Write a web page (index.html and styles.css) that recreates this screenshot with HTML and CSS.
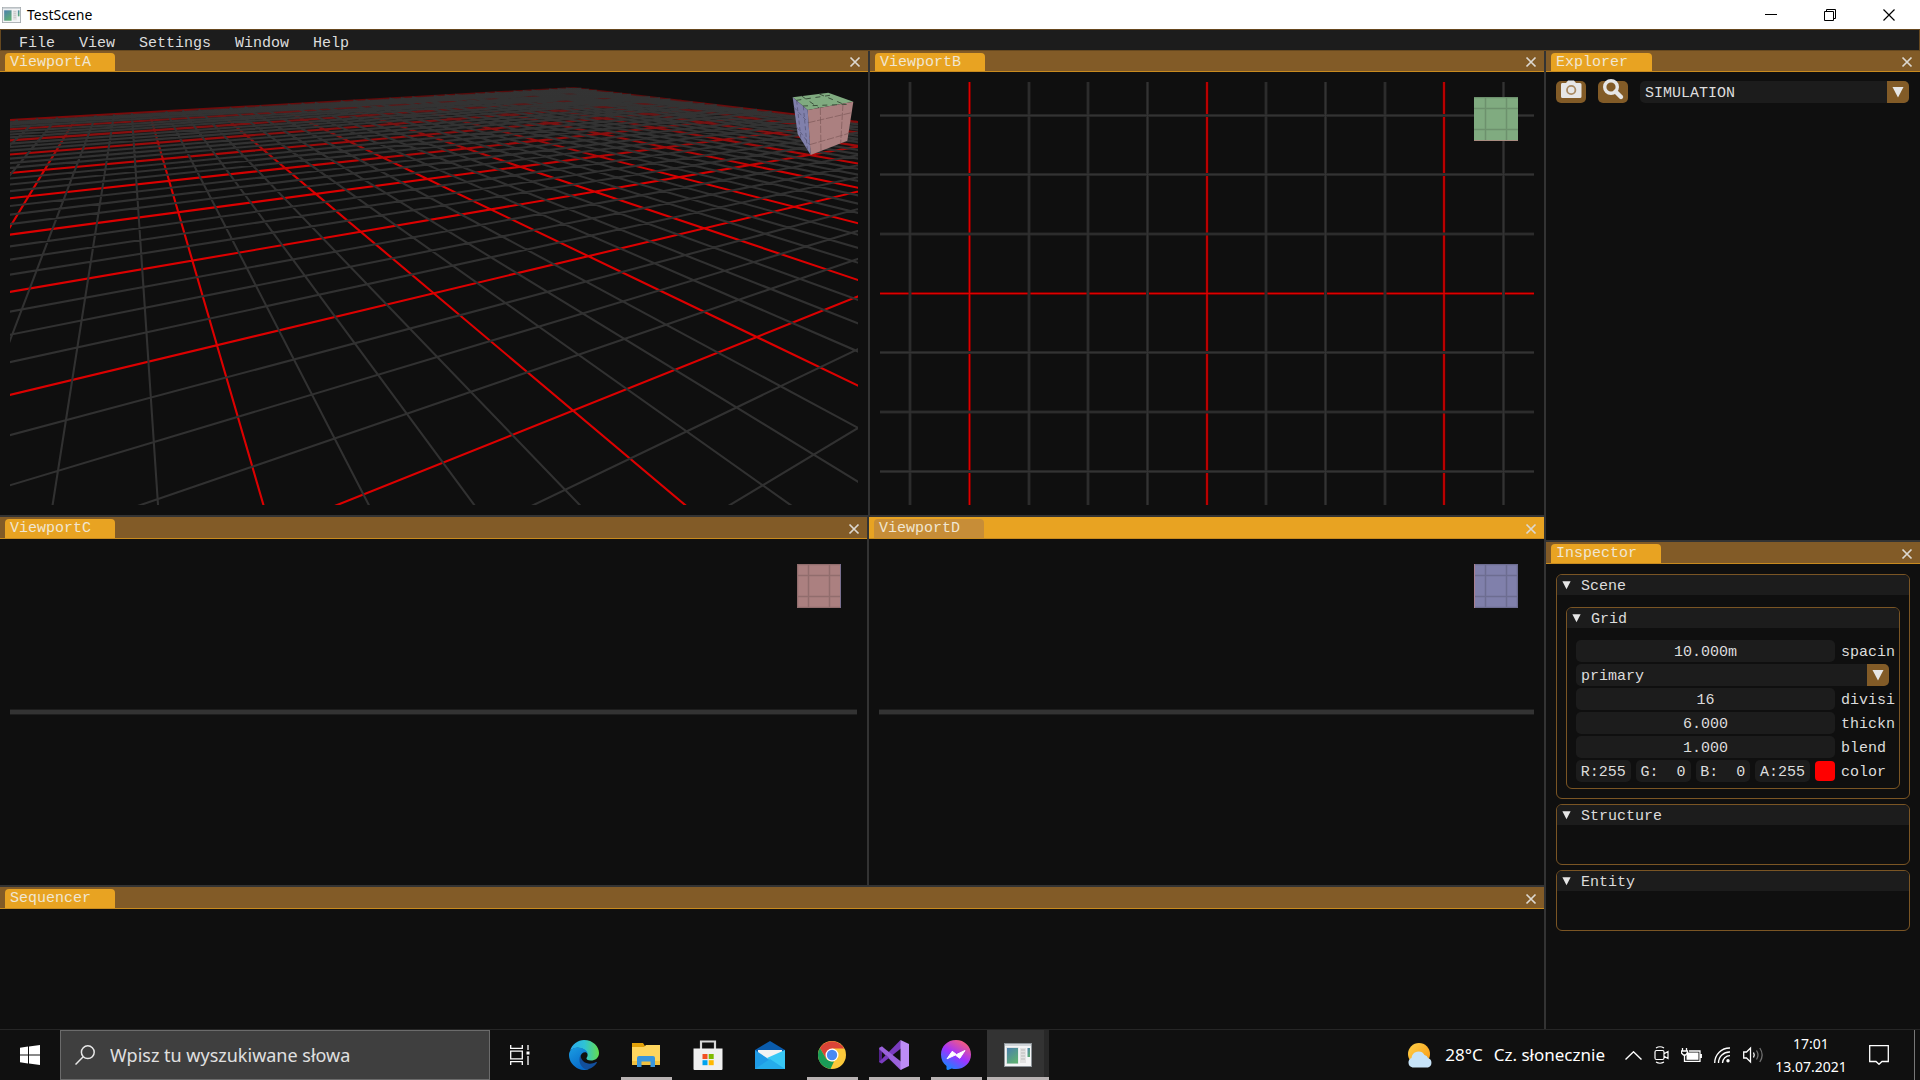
FILE: index.html
```html
<!DOCTYPE html>
<html lang="pl">
<head>
<meta charset="utf-8">
<title>TestScene</title>
<link rel="stylesheet" href="styles.css">
</head>
<body>
<svg class="defs" width="0" height="0" aria-hidden="true">
  <defs>
    <symbol id="close" viewBox="0 0 12 12"><path d="M1.5 1.5L10.5 10.5M10.5 1.5L1.5 10.5" stroke="#dcd8d0" stroke-width="1.7"/></symbol>
    <symbol id="arrow" viewBox="0 0 12 12"><path d="M.5 1H11.5L6 11.5Z" fill="#e6e6e6"/></symbol>
    <linearGradient id="app-pic" x1="0" y1="0" x2="0.6" y2="1"><stop offset="0" stop-color="#4b7fae"/><stop offset="1" stop-color="#5eae74"/></linearGradient>
    <symbol id="app" viewBox="0 0 28 24">
      <path d="M0 0H28V24H0Z" fill="#8d9499"/><path d="M1 1H27V23H1Z" fill="#f4f5f6"/><path d="M1 1H27V3H1Z" fill="#cfd4d8"/>
      <path d="M2 4H14.500V21H2Z" fill="#dfe3e5"/><path d="M3 5H14V20.500H3Z" fill="url(#app-pic)"/>
      <path d="M16 5H22V20H16Z" fill="#e2e2e2"/><path d="M17 7H21M17 10H21M17 13H21M17 16H21" stroke="#bbb"/>
      <path d="M23.500 5H26V14H23.500Z" fill="url(#app-pic)"/>
    </symbol>
  </defs>
</svg>

<header class="titlebar">
  <svg class="titlebar-icon" aria-hidden="true"><use href="#app"/></svg>
  <h1 class="titlebar-name">TestScene</h1>
  <div class="titlebar-buttons">
    <button class="win-button" aria-label="Minimize"><svg width="12" height="12"><path d="M0 5.500H12" stroke="#000"/></svg></button>
    <button class="win-button" aria-label="Restore"><svg width="12" height="12" fill="none" stroke="#000"><path d="M.5 2.500H9.500V11.500H.5ZM2.500 2.500V.5H11.500V9.500H9.500"/></svg></button>
    <button class="win-button" aria-label="Close"><svg width="12" height="12"><path d="M.5.5L11.500 11.500M11.500.5L.5 11.500" stroke="#000" stroke-width="1.200"/></svg></button>
  </div>
</header>

<nav class="menubar">
  <button class="menu-item">File</button>
  <button class="menu-item">View</button>
  <button class="menu-item">Settings</button>
  <button class="menu-item">Window</button>
  <button class="menu-item">Help</button>
</nav>

<main class="workspace">
  <div class="views">
    <div class="views-top">
      <section class="pane">
        <div class="tabbar"><h2 class="tab">ViewportA</h2><button class="tab-close" aria-label="Close ViewportA"><svg><use href="#close"/></svg></button></div>
        <div class="viewport">
          <svg class="scene" id="perspective" viewBox="10 82 848 423" preserveAspectRatio="xMidYMid slice">
            <defs>
              <linearGradient id="fade" gradientUnits="userSpaceOnUse" x1="0" y1="88" x2="0" y2="180"><stop offset="0" stop-color="#e00000" stop-opacity=".3"/><stop offset=".45" stop-color="#e00000" stop-opacity=".65"/><stop offset="1" stop-color="#dc0000"/></linearGradient>
              <linearGradient id="haze" gradientUnits="userSpaceOnUse" x1="0" y1="88" x2="0" y2="170"><stop offset="0" stop-color="#363636"/><stop offset=".4" stop-color="#363636" stop-opacity=".5"/><stop offset="1" stop-color="#363636" stop-opacity="0"/></linearGradient>
            </defs>
          </svg>
          <svg class="cube cube-solid" viewBox="66 66 186 192" stroke-linejoin="round">
            <path d="M68 82L175 68L250 95L113 120Z" fill="#80ab80"/>
            <path d="M113 120L250 95L232 212L122 255Z" fill="#ab8080"/>
            <path d="M68 82L113 120L122 255L83 192Z" fill="#8080ab"/>
            <path d="M79 91L193 74M99 108L232 103M95 78L147 114M148 72L217 101" stroke="#3c513c" stroke-width="3" stroke-dasharray="15 14" fill="none"/>
            <path d="M115 158L245 128M119 224L237 190M151 113L153 243M219 101L212 220" stroke="#7a5656" stroke-width="2" stroke-dasharray="22 5" fill="none"/>
            <path d="M72 112L115 158M79 170L119 224M80 92L93 208M100 109L112 238" stroke="#50506e" stroke-width="2" stroke-dasharray="12 8" fill="none"/>
          </svg>
        </div>
      </section>
      <section class="pane">
        <div class="tabbar"><h2 class="tab">ViewportB</h2><button class="tab-close" aria-label="Close ViewportB"><svg><use href="#close"/></svg></button></div>
        <div class="viewport">
          <svg class="scene" viewBox="880 82 654 423" preserveAspectRatio="xMidYMid slice" fill="none">
            <path d="M969.500 82V505M1207 82V505M1444 82V505M880 293.500H1534" stroke="#500000" stroke-width="3"/>
            <path d="M969.500 82V505M1207 82V505M1444 82V505M880 293.500H1534" stroke="#dc0000" stroke-width="1.500"/>
            <path d="M910 82V505M1029 82V505M1088 82V505M1147.500 82V505M1266 82V505M1325.500 82V505M1385 82V505M1503.500 82V505M880 115.500H1534M880 174.500H1534M880 234H1534M880 352.500H1534M880 412H1534M880 471.500H1534" stroke="#262626" stroke-width="3"/>
            <path d="M910 82V505M1029 82V505M1088 82V505M1147.500 82V505M1266 82V505M1325.500 82V505M1385 82V505M1503.500 82V505M880 115.500H1534M880 174.500H1534M880 234H1534M880 352.500H1534M880 412H1534M880 471.500H1534" stroke="#333"/>
          </svg>
          <svg class="cube cube-flat" viewBox="0 0 44 44"><path d="M0 0H44V44H0Z" fill="#80ab80"/><path d="M11.500 0V44M32.500 0V44M0 11.500H44M0 32.500H44M0 .5H44" stroke="#6d916d" stroke-width="1.500"/><path d="M0 43.500H44" stroke="#a98c80"/></svg>
        </div>
      </section>
    </div>
    <div class="views-bottom">
      <section class="pane">
        <div class="tabbar"><h2 class="tab">ViewportC</h2><button class="tab-close" aria-label="Close ViewportC"><svg><use href="#close"/></svg></button></div>
        <div class="viewport viewport-edge">
          <svg class="cube cube-flat" viewBox="0 0 44 44"><path d="M0 0H44V44H0Z" fill="#ab8080"/><path d="M11.500 0V44M32.500 0V44M0 11.500H44M0 32.500H44M0 .5H44M0 43.500H44M.5 0V44" stroke="#916d6d" stroke-width="1.500"/><path d="M43.500 0V44" stroke="#7a7090"/></svg>
        </div>
      </section>
      <section class="pane pane-focused">
        <div class="tabbar"><h2 class="tab">ViewportD</h2><button class="tab-close" aria-label="Close ViewportD"><svg><use href="#close"/></svg></button></div>
        <div class="viewport viewport-edge">
          <svg class="cube cube-flat" viewBox="0 0 44 44"><path d="M0 0H44V44H0Z" fill="#8080ab"/><path d="M11.500 0V44M32.500 0V44M0 11.500H44M0 32.500H44M0 .5H44M0 43.500H44M43.500 0V44" stroke="#6d6d91" stroke-width="1.500"/><path d="M.5 0V44" stroke="#a98090"/></svg>
        </div>
      </section>
    </div>
    <section class="pane">
      <div class="tabbar"><h2 class="tab">Sequencer</h2><button class="tab-close" aria-label="Close Sequencer"><svg><use href="#close"/></svg></button></div>
    </section>
  </div>

  <aside class="sidebar">
    <section class="pane pane-top">
      <div class="tabbar"><h2 class="tab tab-short">Explorer</h2><button class="tab-close" aria-label="Close Explorer"><svg><use href="#close"/></svg></button></div>
      <div class="explorer">
        <button class="tool" aria-label="Camera"><svg viewBox="0 0 30 26"><path d="M6 6H10L12 3.500H18L20 6H24Q25.500 6 25.500 7.500V19.500Q25.500 21 24 21H6.500Q5 21 5 19.500V7.500Q5 6 6 6Z" fill="#e6e6e6"/><circle cx="15.200" cy="13" r="4.200" fill="none" stroke="#a98a62" stroke-width="1.800"/></svg></button>
        <button class="tool" aria-label="Search"><svg viewBox="0 0 30 26"><circle cx="13" cy="10" r="6.300" fill="none" stroke="#e6e6e6" stroke-width="3.400"/><path d="M17.500 14.500L23 20" stroke="#e6e6e6" stroke-width="4.400" stroke-linecap="round"/></svg></button>
        <div class="combo"><select class="combo-select" aria-label="Mode"><option>SIMULATION</option></select><span class="combo-arrow"><svg><use href="#arrow"/></svg></span></div>
      </div>
    </section>
    <section class="pane">
      <div class="tabbar"><h2 class="tab">Inspector</h2><button class="tab-close" aria-label="Close Inspector"><svg><use href="#close"/></svg></button></div>
      <div class="inspector">
        <section class="group">
          <h3 class="group-head"><svg><use href="#arrow"/></svg>Scene</h3>
          <div class="group-body">
            <section class="group">
              <h3 class="group-head"><svg><use href="#arrow"/></svg>Grid</h3>
              <div class="fields">
                <div class="field"><input class="value" id="spacing" value="10.000m"><label class="field-label" for="spacing">spacin</label></div>
                <div class="combo"><select class="combo-select" aria-label="Grid level"><option>primary</option></select><span class="combo-arrow"><svg><use href="#arrow"/></svg></span></div>
                <div class="field"><input class="value" id="divisions" value="16"><label class="field-label" for="divisions">divisi</label></div>
                <div class="field"><input class="value" id="thickness" value="6.000"><label class="field-label" for="thickness">thickn</label></div>
                <div class="field"><input class="value" id="blend" value="1.000"><label class="field-label" for="blend">blend</label></div>
                <div class="field">
                  <div class="channels">
                    <input class="value" aria-label="Red" value="R:255">
                    <input class="value" aria-label="Green" value="G:&nbsp;&nbsp;0">
                    <input class="value" aria-label="Blue" value="B:&nbsp;&nbsp;0">
                    <input class="value" aria-label="Alpha" value="A:255">
                    <button class="swatch" id="swatch" aria-label="Pick color"></button>
                  </div>
                  <label class="field-label" for="swatch">color</label>
                </div>
              </div>
            </section>
          </div>
        </section>
        <section class="group group-empty"><h3 class="group-head"><svg><use href="#arrow"/></svg>Structure</h3></section>
        <section class="group group-empty"><h3 class="group-head"><svg><use href="#arrow"/></svg>Entity</h3></section>
      </div>
    </section>
  </aside>
</main>

<footer class="taskbar">
  <button class="start" aria-label="Start"><svg width="20" height="20" fill="#fff"><path d="M0 2.700L8 1.600V9.500H0ZM9 1.500L20 0V9.500H9ZM0 10.500H8V18.400L0 17.300ZM9 10.500H20V20L9 18.500Z"/></svg></button>
  <div class="search">
    <svg width="20" height="20" fill="none" stroke="#e8e8e8" stroke-width="1.500"><circle cx="12.800" cy="7.200" r="6.400"/><path d="M8.200 11.800L.5 19.500"/></svg>
    <input class="search-input" type="text" aria-label="Szukaj" placeholder="Wpisz tu wyszukiwane słowa">
  </div>
  <div class="apps">
    <button class="task task-view" aria-label="Task view"><svg width="20" height="20" fill="none" stroke="#fff" stroke-width="1.300"><path d="M.7 0V3.300H12.300V0M.7 6.200H12.300V13.800H.7ZM.7 20V16.700H12.300V20M18 0V5M18 11V20"/><path d="M16.500 6.500H19.500V9.500H16.500Z" fill="#fff" stroke="none"/></svg></button>
    <button class="task" aria-label="Edge"><svg width="30" height="30" viewBox="0 0 30 30">
      <defs><linearGradient id="edge-a" x1="0" y1=".5" x2="1" y2=".5"><stop offset="0" stop-color="#2aaaf0"/><stop offset=".5" stop-color="#2fc3d5"/><stop offset="1" stop-color="#64dd4e"/></linearGradient><linearGradient id="edge-b" x1="0" y1="0" x2=".6" y2="1"><stop offset="0" stop-color="#1b9de2"/><stop offset="1" stop-color="#0668c8"/></linearGradient></defs>
      <path d="M1 11C3 4 9 0 15 0C24 0 30 6.500 30 13C30 18 26 20.500 22 20.500C18.500 20.500 17 19 17.500 18C19 16 19 14 17.500 12C13 6 4 7 1 11Z" fill="url(#edge-a)"/>
      <path d="M0 15C0 10 4 7.500 9 7.500C14 7.500 18.500 10.500 18.800 14C18 12 15 11.500 13 13.500C9 18 12 27 20 29C17 30.500 13 30.200 10 29C4 26.500 0 21 0 15Z" fill="url(#edge-b)"/>
      <path d="M11.500 15C8.500 21 12 28.500 18 29.600C22.500 28.500 26.500 25.500 28 22.500C28.200 21.800 27.500 21.800 27 22C21 25.500 12 23.500 11.500 15Z" fill="#124f9c"/>
    </svg></button>
    <button class="task task-open" aria-label="File Explorer"><svg width="28" height="24" viewBox="0 0 28 24"><path d="M0 0H11L13 3V5H0Z" fill="#e3a209"/><path d="M0 4H12L14 2H28V22H0Z" fill="#ffd65e"/><path d="M0 18H28V22H0Z" fill="#f2c13f"/><path d="M5 24V15Q5 13 7 13H21Q23 13 23 15V24H18.500V18.500H9.500V24Z" fill="#3a96dd"/></svg></button>
    <button class="task" aria-label="Microsoft Store"><svg width="30" height="30" viewBox="0 0 30 30"><path d="M8 10V1.500H22V10" fill="none" stroke="#d8d8d8" stroke-width="2.200"/><path d="M.5 8.500H29.500V29Q29.500 30 28.500 30H1.500Q.5 30 .5 29Z" fill="#f0f0f0"/><path d="M9.500 14H14.500V19H9.500Z" fill="#f25022"/><path d="M15.700 14H20.700V19H15.700Z" fill="#7fba00"/><path d="M9.500 20.200H14.500V25.200H9.500Z" fill="#00a4ef"/><path d="M15.700 20.200H20.700V25.200H15.700Z" fill="#ffb900"/></svg></button>
    <button class="task" aria-label="Mail"><svg width="30" height="28" viewBox="0 0 30 28"><path d="M0 9L15 0L30 9V14H0Z" fill="#0a5cad"/><path d="M3 9H27V18L15 22L3 18Z" fill="#f3f3f3"/><path d="M0 9L15 19L30 28H0Z" fill="#1f9be6"/><path d="M30 9V28H27L12 17Z" fill="#38c8f5"/><path d="M0 28L15 18L30 28Z" fill="#25aceb"/></svg></button>
    <button class="task task-open" aria-label="Chrome"><svg width="28" height="28" viewBox="0 0 28 28"><circle cx="14" cy="14" r="14" fill="#fbc83a"/><path d="M14 14L8 17.500L1.900 7A14 14 0 0 1 26.100 7.500H14Z" fill="#db4437"/><path d="M1.900 7L8 17.500Q10.500 21 16 20.500L12.500 28A14 14 0 0 1 1.900 7Z" fill="#1a9c57"/><circle cx="14" cy="14" r="6.500" fill="#fff"/><circle cx="14" cy="14" r="5.200" fill="#4a8af4"/></svg></button>
    <button class="task task-open" aria-label="Visual Studio"><svg width="30" height="30" viewBox="0 0 30 30"><path d="M0 8L3 6.500V23.500L0 22Z" fill="#52218a"/><path d="M3 6.500L22.500 27L21.500 30L0 9Z" fill="#9158d4"/><path d="M0 22L21.500 0L22.500 8L3 23.500Z" fill="#7a3cbf"/><path d="M3 6.500L22.500 22V30L0 8Z" fill="#9b63da"/><path d="M21.500 0L30 4V26L21.500 30Z" fill="#bd8cf7"/></svg></button>
    <button class="task task-open" aria-label="Messenger"><svg width="30" height="30" viewBox="0 0 30 30"><defs><linearGradient id="msg" x1=".2" y1="1" x2=".8" y2="0"><stop offset="0" stop-color="#0a8cff"/><stop offset=".5" stop-color="#a033ff"/><stop offset="1" stop-color="#ff6170"/></linearGradient></defs><path d="M15 0C23.500 0 30 6.300 30 14.500S23.500 29 15 29C13.500 29 12 28.800 10.700 28.400L7 30Q5.700 30 5.500 29V26C2 23.500 0 19.500 0 14.500C0 6.300 6.500 0 15 0Z" fill="url(#msg)"/><path d="M6 18.800L11.200 11.300L15.500 14.500L24 10.500L18.800 18.300L14.300 15Z" fill="#fff" stroke="#fff" stroke-width="1" stroke-linejoin="round"/></svg></button>
    <button class="task task-open task-active" aria-label="TestScene"><svg width="28" height="24"><use href="#app"/></svg></button>
  </div>
  <div class="tray">
    <button class="weather"><svg width="26" height="25" viewBox="0 0 26 25"><defs><linearGradient id="sun" x1="0" y1="0" x2="1" y2="1"><stop offset="0" stop-color="#ffd24a"/><stop offset="1" stop-color="#f79510"/></linearGradient></defs><circle cx="12" cy="11" r="11" fill="url(#sun)"/><path d="M5.500 24.500A5 5 0 0 1 4.500 15A7 7 0 0 1 17.500 12A5 5 0 0 1 21 15A5 5 0 0 1 21 24.500Z" fill="#c7e3f8"/></svg><span>28°C</span><span>Cz. słonecznie</span></button>
    <button class="tray-icon" aria-label="Hidden icons"><svg width="17" height="9" fill="none" stroke="#fff" stroke-width="1.400"><path d="M.5 8.500L8.500 .8L16.500 8.500"/></svg></button>
    <button class="tray-icon" aria-label="Meet now"><svg width="15" height="18" fill="none" stroke="#fff" stroke-width="1.200"><path d="M2.500 4.500H8.500Q10 4.500 10 6V12Q10 13.500 8.500 13.500H2.500Q1 13.500 1 12V6Q1 4.500 2.500 4.500ZM10 7.800L14 5.500V12.500L10 10.200M2 2Q6 -.5 10 2M2 16Q6 18.500 10 16"/></svg></button>
    <button class="tray-icon" aria-label="Battery"><svg width="21" height="14" fill="none" stroke="#fff" stroke-width="1.300"><path d="M1.500 0V3M5.500 0V3M.5 3H6.500V5L4.500 7H2.500L.5 5ZM3.500 7V13.300H19V3H8M20.300 6V10"/><path d="M5.500 4.500H8V4.500H17.500V11.800H5.500Z" fill="#fff" stroke="none"/></svg></button>
    <button class="tray-icon" aria-label="Network"><svg width="17" height="16" fill="none" stroke="#fff" stroke-width="1.300"><path d="M.7 16A15 15 0 0 1 16 1M4.500 16A11 11 0 0 1 16 5M8.500 16A7.500 7.500 0 0 1 16 8.700"/><circle cx="14" cy="13.800" r="1.700" fill="#fff" stroke="none"/></svg></button>
    <button class="tray-icon" aria-label="Volume"><svg width="21" height="18" fill="none" stroke="#fff" stroke-width="1.300"><path d="M.7 6H3.500L7.500 2V16L3.500 12H.7ZM10.500 6.500Q12 9 10.500 11.500"/><path d="M13.500 4.500Q16.500 9 13.500 13.500M16.800 2Q21.500 9 16.800 16" stroke="#707070"/></svg></button>
    <button class="clock"><time>17:01</time><time>13.07.2021</time></button>
    <button class="tray-icon" aria-label="Notifications"><svg width="20" height="20" fill="none" stroke="#fff" stroke-width="1.300"><path d="M.7 .7H19.300V16.500H13L10 19.300L7 16.500H.7Z"/></svg></button>
  </div>
  <button class="show-desktop" aria-label="Show desktop"></button>
</footer>
<script src="scene.js"></script>
</body>
</html>
```

FILE: styles.css
```css
* { box-sizing: border-box; margin: 0; }

body {
  min-height: 100vh;
  display: flex;
  flex-direction: column;
  background: #0f0f0f;
  color: #dcdcdc;
  font: 15px/20px "Liberation Mono", monospace;
}

button, input, select {
  appearance: none;
  border: 0;
  padding: 0;
  background: none;
  color: inherit;
  font: inherit;
}
h1, h2, h3 { font: inherit; }
svg { display: block; flex: none; }
.defs { position: absolute; }

/* window frame */
.titlebar {
  height: 29px;
  display: flex;
  align-items: center;
  gap: 6px;
  padding: 0 2px;
  background: #fff;
  color: #000;
  font: 14px/20px "Noto Sans", sans-serif;
}
.titlebar-icon { width: 19px; height: 16px; }
.titlebar-name { flex: 1; }
.titlebar-buttons { display: flex; height: 100%; }
.win-button { width: 59px; display: grid; place-items: center; }

.menubar {
  height: 22px;
  display: flex;
  align-items: center;
  gap: 24px;
  padding: 7px 18px 0;
  background: #1c1c1c;
  border: 1px solid #66481f;
}

/* docked panes */
.workspace {
  flex: 1;
  display: grid;
  grid-template-columns: minmax(0, 1544fr) minmax(0, 374fr);
  gap: 2px;
  background: #333;
}
.views { display: grid; grid-template-rows: minmax(0, 464fr) minmax(0, 368fr) minmax(0, 142fr); gap: 2px; }
.views-top { display: grid; grid-template-columns: minmax(0, 868fr) minmax(0, 674fr); gap: 2px; }
.views-bottom { display: grid; grid-template-columns: minmax(0, 867fr) minmax(0, 675fr); gap: 2px; }
.sidebar { display: grid; grid-template-rows: 489fr 487fr; gap: 2px; }
.pane { display: flex; flex-direction: column; min-width: 0; min-height: 0; background: #0f0f0f; }

.tabbar {
  height: 22px;
  display: flex;
  justify-content: space-between;
  padding: 2px 7px 0 5px;
  background: #825b27;
  border-bottom: 1px solid #c88a1e;
}
.views-top .tabbar, .pane-top .tabbar { height: 21px; }
.tab {
  width: 110px;
  padding-left: 5px;
  line-height: 20px;
  background: #e8a322;
  color: #f0e6d2;
  border-radius: 4px 4px 0 0;
}
.tab-short { width: 101px; }
.tab-close { display: grid; place-items: center; }
.tab-close svg { width: 12px; height: 12px; }
.pane-focused .tabbar { background: #e8a322; }
.pane-focused .tab { background: #c78d37; }

.viewport { position: relative; flex: 1; min-height: 0; display: flex; margin: 10px; overflow: hidden; }
.viewport-edge { align-items: center; }
.viewport-edge::before { content: ""; flex: 1; height: 4px; background: #333; border: solid #1e1e1e; border-width: 1px 0; }
.scene { flex: 1; min-width: 0; width: 100%; height: 100%; }
.cube { position: absolute; }
.cube-flat { width: 44px; height: 44px; top: 15px; right: 16px; }
.cube-solid { width: 62px; height: 64px; top: 10px; right: 4px; }

/* explorer */
.explorer { display: flex; gap: 12px; padding: 9px 11px 9px 10px; }
.tool { width: 30px; height: 22px; background: #825b27; border-radius: 5px; }
.tool svg { width: 30px; height: 26px; margin-top: -5px; }

.combo { display: flex; flex: 1; height: 22px; background: #1c1c1c; border-radius: 5px; position: relative; overflow: hidden; }
.combo-select { flex: 1; padding: 3px 0 0 5px; outline: 0; }
.combo-arrow { width: 22px; display: grid; place-items: center; background: #825b27; pointer-events: none; }
.combo-arrow svg { width: 12px; height: 12px; }

/* inspector */
.inspector { display: flex; flex-direction: column; gap: 5px; padding: 10px; }
.group { border: 1px solid #7a5524; border-radius: 6px; overflow: hidden; }
.group-head { display: flex; align-items: center; gap: 10px; height: 20px; padding: 3px 0 0 5px; background: #1c1c1c; }
.group-head svg { width: 9px; height: 10px; margin-bottom: 3px; }
.group-body { padding: 12px 9px 9px; }
.group-empty { min-height: 61px; }
.fields { display: flex; flex-direction: column; gap: 2px; padding: 12px 4px 6px 9px; }
.fields .combo { flex: none; margin-right: 6px; }
.field { display: flex; gap: 6px; height: 22px; line-height: 25px; }
.value { flex: 1; min-width: 0; height: 22px; padding-top: 3px; line-height: 19px; background: #1c1c1c; border-radius: 5px; text-align: center; }
.field-label { width: 54px; overflow: hidden; white-space: nowrap; }
.channels { flex: 1; min-width: 0; display: flex; gap: 5px; }
.swatch { width: 20px; height: 20px; margin-top: 1px; background: #f00; border-radius: 4px; }

/* taskbar */
.taskbar {
  height: 51px;
  display: flex;
  border-top: 1px solid #262626;
  background: #101010;
  color: #fff;
  font: 17px/24px "Noto Sans", sans-serif;
}
.start { width: 60px; display: grid; place-items: center; }
.search { width: 430px; display: flex; align-items: center; gap: 15px; padding: 0 14px; background: #3f3f3f; border: 1px solid #6b6b6b; }
.search-input { flex: 1; min-width: 0; font-size: 18px; outline: 0; }
.search-input::placeholder { color: #e0e0e0; opacity: 1; }
.apps { display: flex; }
.task { position: relative; width: 62px; display: grid; place-items: center; }
.task-view { width: 63px; padding-right: 3px; }
.task-open::after { content: ""; position: absolute; bottom: 0; left: 6px; right: 5px; height: 3px; background: #b8b2b2; }
.task-active { background: linear-gradient(90deg, #333 57px, #282828 57px); }
.task-active::after { left: 0; right: 0; }
.tray { flex: 1; display: flex; justify-content: flex-end; align-items: center; gap: 12px; padding-right: 25px; }
.weather { display: flex; align-items: center; gap: 11px; margin-right: 8px; }
.weather svg { margin-right: 1px; }
.clock { width: 70px; display: flex; flex-direction: column; align-items: center; font-size: 14px; line-height: 23px; }
.clock + .tray-icon { margin-left: 11px; }
.show-desktop { width: 6px; border-left: 1px solid #777; }
```

FILE: scene.js
```js
// Ground plane seen in perspective: u and v count the primary (red) cells,
// each split into four secondary cells.
const svg = document.getElementById("perspective");
const NS = "http://www.w3.org/2000/svg";
const U = [-7, 9];
const V = [-8, 8];
const NEAR = 0.3;

const depth = (u, v) => 1 + 0.201 * u + 0.3745 * v;

function project(u, v) {
  const w = depth(u, v);
  return [(217 + 304 * u + 47.4 * v) / w, 34.5 + 310.8 / w];
}

function segment(a, b) {
  const da = depth(...a);
  const db = depth(...b);
  if (db <= NEAR) return "";
  if (da < NEAR) {
    const k = (NEAR - da) / (db - da);
    a = [a[0] + (b[0] - a[0]) * k, a[1] + (b[1] - a[1]) * k];
  }
  const [x1, y1] = project(...a);
  const [x2, y2] = project(...b);
  return `M${x1.toFixed(1)} ${y1.toFixed(1)}L${x2.toFixed(1)} ${y2.toFixed(1)}`;
}

function draw(d, stroke, width) {
  const path = document.createElementNS(NS, "path");
  path.setAttribute("d", d);
  path.setAttribute("stroke", stroke);
  path.setAttribute("stroke-width", width);
  path.setAttribute("fill", "none");
  svg.append(path);
}

let primary = "";
let secondary = "";
for (let q = U[0] * 4; q <= U[1] * 4; q++) {
  const d = segment([q / 4, V[0]], [q / 4, V[1]]);
  if (q % 4) secondary += d; else primary += d;
}
for (let q = V[0] * 4; q <= V[1] * 4; q++) {
  const d = segment([U[0], q / 4], [U[1], q / 4]);
  if (q % 4) secondary += d; else primary += d;
}

const corners = [project(9, 8), project(9, -2), project(-7, 4), project(-7, 8)];
draw(primary, "url(#fade)", 2.1);
draw(secondary, "#313131", 2.1);
const haze = document.createElementNS(NS, "polygon");
haze.setAttribute("points", corners.map(p => p.join()).join(" "));
haze.setAttribute("fill", "url(#haze)");
haze.setAttribute("opacity", ".5");
svg.append(haze);
```
